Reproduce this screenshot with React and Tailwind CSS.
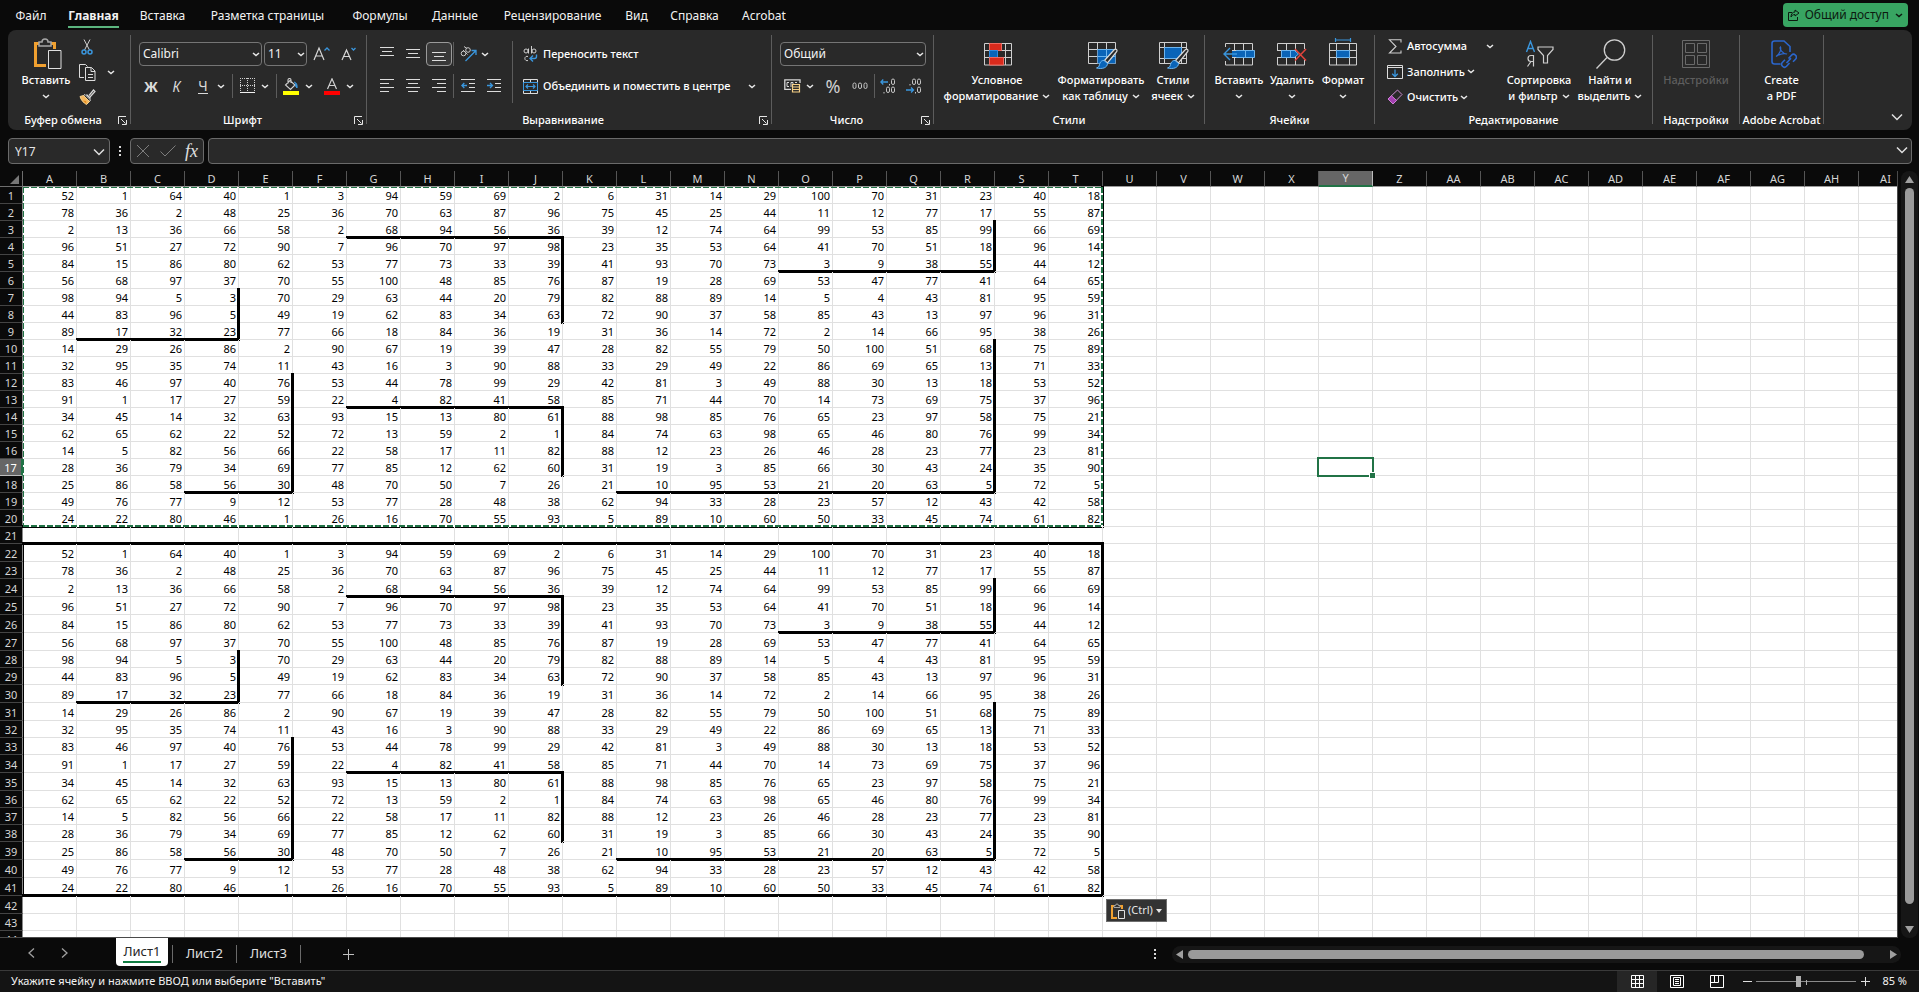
import React from "react";

const ROWS = [
  [52, 1, 64, 40, 1, 3, 94, 59, 69, 2, 6, 31, 14, 29, 100, 70, 31, 23, 40, 18],
  [78, 36, 2, 48, 25, 36, 70, 63, 87, 96, 75, 45, 25, 44, 11, 12, 77, 17, 55, 87],
  [2, 13, 36, 66, 58, 2, 68, 94, 56, 36, 39, 12, 74, 64, 99, 53, 85, 99, 66, 69],
  [96, 51, 27, 72, 90, 7, 96, 70, 97, 98, 23, 35, 53, 64, 41, 70, 51, 18, 96, 14],
  [84, 15, 86, 80, 62, 53, 77, 73, 33, 39, 41, 93, 70, 73, 3, 9, 38, 55, 44, 12],
  [56, 68, 97, 37, 70, 55, 100, 48, 85, 76, 87, 19, 28, 69, 53, 47, 77, 41, 64, 65],
  [98, 94, 5, 3, 70, 29, 63, 44, 20, 79, 82, 88, 89, 14, 5, 4, 43, 81, 95, 59],
  [44, 83, 96, 5, 49, 19, 62, 83, 34, 63, 72, 90, 37, 58, 85, 43, 13, 97, 96, 31],
  [89, 17, 32, 23, 77, 66, 18, 84, 36, 19, 31, 36, 14, 72, 2, 14, 66, 95, 38, 26],
  [14, 29, 26, 86, 2, 90, 67, 19, 39, 47, 28, 82, 55, 79, 50, 100, 51, 68, 75, 89],
  [32, 95, 35, 74, 11, 43, 16, 3, 90, 88, 33, 29, 49, 22, 86, 69, 65, 13, 71, 33],
  [83, 46, 97, 40, 76, 53, 44, 78, 99, 29, 42, 81, 3, 49, 88, 30, 13, 18, 53, 52],
  [91, 1, 17, 27, 59, 22, 4, 82, 41, 58, 85, 71, 44, 70, 14, 73, 69, 75, 37, 96],
  [34, 45, 14, 32, 63, 93, 15, 13, 80, 61, 88, 98, 85, 76, 65, 23, 97, 58, 75, 21],
  [62, 65, 62, 22, 52, 72, 13, 59, 2, 1, 84, 74, 63, 98, 65, 46, 80, 76, 99, 34],
  [14, 5, 82, 56, 66, 22, 58, 17, 11, 82, 88, 12, 23, 26, 46, 28, 23, 77, 23, 81],
  [28, 36, 79, 34, 69, 77, 85, 12, 62, 60, 31, 19, 3, 85, 66, 30, 43, 24, 35, 90],
  [25, 86, 58, 56, 30, 48, 70, 50, 7, 26, 21, 10, 95, 53, 21, 20, 63, 5, 72, 5],
  [49, 76, 77, 9, 12, 53, 77, 28, 48, 38, 62, 94, 33, 28, 23, 57, 12, 43, 42, 58],
  [24, 22, 80, 46, 1, 26, 16, 70, 55, 93, 5, 89, 10, 60, 50, 33, 45, 74, 61, 82],
];

const LETTERS = "ABCDEFGHIJKLMNOPQRSTUVWXYZ".split("");
const COLUMNS = [...LETTERS, ...LETTERS.slice(0, 9).map((l) => "A" + l)];
const TALL_ROWS = new Set([22, 24, 25, 26, 27, 30, 31, 34, 35, 39, 40, 41, 42]);

/* Wall segments inside a 20x20 block: [column, first row, last row]. */
const WALLS_RIGHT = [
  ["J", 4, 8],
  ["J", 14, 17],
  ["D", 7, 9],
  ["E", 12, 18],
  ["R", 3, 5],
  ["R", 10, 18],
  ["T", 1, 20],
];
/* [row, first column, last column] */
const WALLS_BOTTOM = [
  [3, "G", "J"],
  [13, "G", "J"],
  [9, "B", "D"],
  [18, "D", "E"],
  [5, "O", "R"],
  [18, "L", "R"],
  [20, "A", "T"],
];

function cellInfo(row, c) {
  const inBlock = c < 20 && (row <= 20 || (row >= 22 && row <= 41));
  if (!inBlock) {
    return { value: "", right: false, bottom: row === 21 && c < 20, left: false };
  }
  const r = row > 21 ? row - 21 : row;
  const col = COLUMNS[c];
  return {
    value: ROWS[r - 1][c],
    right: WALLS_RIGHT.some(([k, a, b]) => k === col && r >= a && r <= b),
    bottom: WALLS_BOTTOM.some(([k, a, b]) => k === r && col >= a && col <= b),
    left: row >= 22 && c === 0,
  };
}

function Chev({ className = "text-[#e6e6e6]" }) {
  return (
    <svg width="8" height="5" viewBox="0 0 8 5" fill="none" className={"shrink-0 " + className}>
      <path d="M1 1l3 2.500L7 1" stroke="currentColor" strokeWidth="1.500" />
    </svg>
  );
}

function BigChev() {
  return (
    <svg width="12" height="8" viewBox="0 0 12 8" fill="none">
      <path d="M1 1.500l5 5 5-5" stroke="#e0e0e0" strokeWidth="1.500" />
    </svg>
  );
}

function Drop({ label, className = "w-[14px] justify-end" }) {
  return (
    <button aria-label={label} className={"flex h-6 items-center " + className}>
      <Chev />
    </button>
  );
}

function Tool({ label, className = "", children }) {
  return (
    <button aria-label={label} className={"flex h-6 shrink-0 items-center justify-center whitespace-nowrap " + className}>
      {children}
    </button>
  );
}

function Sep({ className = "w-[14px]" }) {
  return (
    <div className={"flex h-6 shrink-0 justify-center " + className}>
      <div className="h-full w-px bg-[#5c5c5c]" />
    </div>
  );
}

function Group({ label, launcher, className, children }) {
  return (
    <>
      <section aria-label={label} className={"flex h-full shrink-0 flex-col " + className}>
        <div className="flex h-20 min-w-0">{children}</div>
        <div className="flex h-5 items-center">
          <span className="flex-1 whitespace-nowrap text-center">{label}</span>
          {launcher && (
            <button aria-label={label + ": параметры"} className="flex h-4 w-3 items-center">
              <svg width="9" height="9" viewBox="0 0 9 9" fill="none" stroke="#e6e6e6">
                <path d="M.5 8V.5H8M3 3l4.500 4.500M8.500 4v4.500H4" />
              </svg>
            </button>
          )}
        </div>
      </section>
      <div className="mt-[5px] h-[89px] w-px shrink-0 bg-[#5c5c5c]" />
    </>
  );
}

function Large({ icon, lines, drop, below, className, disabled }) {
  return (
    <button
      disabled={disabled}
      className={"flex shrink-0 flex-col items-center whitespace-nowrap pt-[6px] leading-4 disabled:text-[#5e5e5e] " + className}
    >
      <span className="flex h-9 items-center justify-center">{icon}</span>
      {lines.map((l, i) => (
        <span key={l} className="flex items-center gap-1">
          {l}
          {drop && i === lines.length - 1 && <Chev />}
        </span>
      ))}
      {below && (
        <span className="flex h-4 items-center">
          <Chev />
        </span>
      )}
    </button>
  );
}

function Combo({ id, label, value, className }) {
  return (
    <div className={"relative h-6 " + className}>
      <select
        id={id}
        aria-label={label}
        defaultValue={value}
        className="h-6 w-full appearance-none rounded border border-[#757575] bg-[#292929] pl-[3px] text-[12px] font-normal text-[#f2f2f2]"
      >
        <option>{value}</option>
      </select>
      <span className="pointer-events-none absolute inset-y-0 right-[2px] flex items-center">
        <Chev />
      </span>
    </div>
  );
}

/* ---------- icons ---------- */

function PasteIcon() {
  return (
    <svg width="28" height="32" viewBox="0 0 28 32" fill="none" className="ml-1">
      <path d="M5 5.500H1.500V27.500H12" stroke="#f0a030" strokeWidth="3" />
      <path d="M16 5.500H20.500V11" stroke="#f0a030" strokeWidth="3" />
      <path d="M5 8V4h3a3 3 0 0 1 6 0h3v4z" stroke="#a6a6a6" fill="#292929" strokeWidth="1.500" />
      <path d="M14.500 12.500h12.500v18H14.500z" stroke="#e0e0e0" fill="#292929" />
    </svg>
  );
}

function CutIcon() {
  return (
    <svg width="12" height="16" viewBox="0 0 12 16" fill="none">
      <path d="M3 .5l5.500 10.500M9 .5L3.500 11" stroke="#d0d0d0" />
      <circle cx="3" cy="13" r="2" stroke="#3a96dd" strokeWidth="1.500" />
      <circle cx="9" cy="13" r="2" stroke="#3a96dd" strokeWidth="1.500" />
    </svg>
  );
}

function CopyIcon() {
  return (
    <svg width="17" height="17" viewBox="0 0 17 17" fill="none" stroke="#dcdcdc">
      <path d="M5 13.500H.5V.5h6l2 2M6.500 3.500h6l3.500 3.500v9.500H6.500zM12 3.500V7.500h4M9 10.500h5M9 13.500h5" />
    </svg>
  );
}

function PainterIcon() {
  return (
    <svg width="17" height="16" viewBox="0 0 17 16" fill="none">
      <path d="M7.500 5.500l4 4M10 6.500l4.500-5.500 1.500 1.500-5 5.500" stroke="#d8d8d8" strokeWidth="1.200" />
      <path d="M6 5.500l5.500 5.500-1 1.500-6-6z" stroke="#d8d8d8" />
      <path d="M1 7.500l3.500-1 6 6-3 3C4.500 14 2 11 1 7.500z" fill="#f4b860" stroke="#f7d08a" />
      <path d="M4 11.500l3 .5.500 3z" fill="#e88c1a" />
    </svg>
  );
}

function GrowIcon({ shrink }) {
  return (
    <svg width="17" height="16" viewBox="0 0 17 16" fill="none">
      {shrink ? (
        <path d="M2 14L6.500 4 11 14M3.500 10.500h6" stroke="#d6d6d6" strokeWidth="1.200" />
      ) : (
        <path d="M1 14L6 2l5 12M2.800 10h6.500" stroke="#d6d6d6" strokeWidth="1.200" />
      )}
      <path d={shrink ? "M11.500 2l2 2 2-2" : "M11.500 4.500l2.500-2.500 2.500 2.500"} stroke="#3a96dd" strokeWidth="1.300" />
    </svg>
  );
}

function BordersIcon() {
  return (
    <svg width="15" height="16" viewBox="0 0 15 16" fill="none">
      <path d="M0 .5h15M0 7.500h15" stroke="#d0d0d0" strokeDasharray="1 1" />
      <path d="M.5 0v14M7.500 0v14M14.500 0v14" stroke="#d0d0d0" strokeDasharray="1 1" />
      <path d="M0 14.500h15" stroke="#f0f0f0" />
    </svg>
  );
}

function FillIcon() {
  return (
    <svg width="16" height="17" viewBox="0 0 16 17" fill="none">
      <path d="M7 2.500l5 4.500-4.500 4.500-5-4.500zM5 5.500V2a1.500 1.500 0 0 1 3 0v3" stroke="#d0d0d0" strokeWidth="1.100" />
      <path d="M11 4c2.500.5 3.500 3 3 6-1.500-1.500-2-3-1.500-4" stroke="#3a96dd" fill="#3a96dd" />
      <path d="M0 13h16v4H0z" fill="#ffff00" />
    </svg>
  );
}

function FontColorIcon() {
  return (
    <svg width="16" height="17" viewBox="0 0 16 17" fill="none">
      <path d="M3.500 11L8 .8 12.500 11M5 7.500h6" stroke="#d0d0d0" strokeWidth="1.200" />
      <path d="M0 13h16v4H0z" fill="#ff0000" />
    </svg>
  );
}

function Bars({ bars, h = 14 }) {
  return (
    <svg width="14" height={h} viewBox={"0 0 14 " + h}>
      {bars.map(([x, y, w]) => (
        <rect key={y} x={x} y={y} width={w} height="1" fill="#dcdcdc" />
      ))}
    </svg>
  );
}

function OrientIcon() {
  return (
    <svg width="17" height="16" viewBox="0 0 17 16" fill="none">
      <circle cx="3.500" cy="7.500" r="2.300" stroke="#c8c8c8" />
      <path d="M3 4l4.500 4.500" stroke="#c8c8c8" />
      <circle cx="8" cy="4" r="2.300" stroke="#c8c8c8" />
      <path d="M4 .5l3 2" stroke="#c8c8c8" />
      <path d="M5.500 15L15.500 5M11.500 4.500h4.500v4.500" stroke="#3a96dd" strokeWidth="1.300" />
    </svg>
  );
}

function IndentIcon({ inc }) {
  return (
    <svg width="14" height="14" viewBox="0 0 14 14" fill="none">
      <path d="M0 .5h14M8 4.500h6M8 8.500h6M0 12.500h14" stroke="#dcdcdc" />
      <path d={inc ? "M0 6.500h5.500M3 4l2.500 2.500L3 9" : "M6 6.500H.8M3.300 4L.8 6.500 3.300 9"} stroke="#3a96dd" strokeWidth="1.300" />
    </svg>
  );
}

function WrapIcon() {
  return (
    <svg width="15" height="16" viewBox="0 0 15 16" fill="none">
      <circle cx="3" cy="5" r="2" stroke="#cfcfcf" />
      <path d="M5.500 2.500v5M8.500 0v7.500" stroke="#cfcfcf" />
      <circle cx="11" cy="5" r="2" stroke="#cfcfcf" />
      <path d="M5 10.500a2.200 2.200 0 1 0 0 4" stroke="#cfcfcf" />
      <path d="M13.500 8.500v2q0 2-2 2H7.500M10 9.500l-3 3 3 3" stroke="#3a96dd" strokeWidth="1.400" />
    </svg>
  );
}

function MergeIcon() {
  return (
    <svg width="15" height="15" viewBox="0 0 15 15" fill="none">
      <path d="M.5.500h14v14H.5zM7.500 0v4M7.500 11v4" stroke="#dcdcdc" />
      <path d="M.5 3.500h14v8H.5z" stroke="#3a96dd" fill="#292929" />
      <path d="M3 7.500h9M5 5.500l-2 2 2 2M10 5.500l2 2-2 2" stroke="#3a96dd" strokeWidth="1.200" />
    </svg>
  );
}

function MoneyIcon() {
  return (
    <svg width="17" height="14" viewBox="0 0 17 14" fill="none">
      <path d="M16 4V.8H.8v9.500H7" stroke="#d8d8d8" strokeWidth="1.300" />
      <path d="M5 3.500H3v4h2M7 8V3.500h2V5M11 3.500h2" stroke="#d8d8d8" />
      <path d="M8.500 5.500h7v7.500h-7zM8.500 8h7M8.500 10.500h7" stroke="#f5cf86" fill="#2b2b2b" strokeWidth="1.200" />
    </svg>
  );
}

function Zero({ x, y }) {
  return <rect x={x} y={y} width="3" height="5.500" rx="1.500" stroke="#c4c4c4" />;
}

function DecimalsIcon({ less }) {
  return (
    <svg width="16" height="16" viewBox="0 0 16 16" fill="none">
      {less ? (
        <>
          <Zero x="6.500" y="1" />
          <Zero x="11.500" y="1" />
          <Zero x="11.500" y="9" />
          <path d="M4 6v1.500M9.500 14v1.500" stroke="#c4c4c4" />
          <path d="M0 12h7.500M5 9.500L7.500 12 5 14.500" stroke="#3a96dd" strokeWidth="1.300" />
        </>
      ) : (
        <>
          <Zero x="11.500" y="1" />
          <Zero x="6.500" y="9" />
          <Zero x="11.500" y="9" />
          <path d="M9.500 6v1.500M4 14v1.500" stroke="#c4c4c4" />
          <path d="M8 4H.8M3.300 1.500L.8 4l2.500 2.500" stroke="#3a96dd" strokeWidth="1.300" />
        </>
      )}
    </svg>
  );
}

function CondIcon() {
  return (
    <svg width="28" height="23" viewBox="0 0 28 23" fill="none" className="ml-0.5">
      <path d="M.5.500h27v21.500H.5zM5.500 0v22M13.500 0v22M21.500 0v22M0 7.500h28M0 14.500h28" stroke="#cfcfcf" />
      <path d="M5.500.500h12v7h-12z" fill="#d92a1c" stroke="#ef6a60" />
      <path d="M14 8h7v6h-7z" fill="#292929" />
      <path d="M5.500 7.500h8v7h-8z" fill="#0a64b8" stroke="#2c8be0" />
      <path d="M5.500 14.500h14v7.500h-14z" fill="#d92a1c" stroke="#ef6a60" />
    </svg>
  );
}

function BrushOver() {
  return (
    <>
      <path d="M28.500 7.500c1 .8.500 2-.5 3L19.500 21l-3-2.500 9-10c1-1 2-1.800 3-1z" fill="#292929" stroke="#d8d8d8" strokeWidth="1.200" />
      <path d="M16 18.500l3.500 3c0 4-5 6-11 4.500 3-.8 2.500-2.500 3.500-5 .8-1.800 2.500-2.800 4-2.500z" fill="#0a64b8" stroke="#6cb4ee" />
    </>
  );
}

function TableStyleIcon() {
  return (
    <svg width="31" height="28" viewBox="0 0 31 28" fill="none" className="ml-1 mt-1">
      <path d="M.5.500h27v21H.5zM9.500 0v22M18.500 0v22M0 7.500h28M0 14.500h28" stroke="#cfcfcf" />
      <path d="M9.500 7.500h18v14h-18z" fill="#0a64b8" />
      <path d="M18.500 7.500v14M9.500 14.500h18M9.500 7.500h18" stroke="#6cb4ee" />
      <BrushOver />
    </svg>
  );
}

function CellStyleIcon() {
  return (
    <svg width="31" height="28" viewBox="0 0 31 28" fill="none" className="ml-0.5 mt-1">
      <path d="M.5.500h27v21H.5zM5.500 0v22M22.500 0v22M0 5.500h28M0 16.500h28" stroke="#cfcfcf" />
      <path d="M5.500 5.500h17v11h-17z" fill="#0a64b8" stroke="#6cb4ee" />
      <BrushOver />
    </svg>
  );
}

function InsertIcon() {
  return (
    <svg width="32" height="23" viewBox="0 0 32 23" fill="none">
      <path d="M2.500 4V.5h27V22h-27v-4M11.500 0v22M20.500 0v22M2 7.500h28M2 14.500h28" stroke="#cfcfcf" />
      <path d="M13.500 7.500h18v7h-18z" fill="#0a64b8" stroke="#6cb4ee" />
      <path d="M22.500 7.500v7" stroke="#6cb4ee" />
      <path d="M0 6h9v10H0z" fill="#292929" />
      <path d="M9 8h5v6H9z" fill="#0a64b8" />
      <path d="M14 11H1M7 5l-6 6 6 6" stroke="#3a96dd" strokeWidth="1.400" />
    </svg>
  );
}

function DeleteIcon() {
  return (
    <svg width="30" height="23" viewBox="0 0 30 23" fill="none">
      <path d="M.5 7V.5h27V6M.5 15v7h27v-5M9.500 0v22M18.500 0v22M0 7.500h19M0 14.500h19" stroke="#cfcfcf" />
      <path d="M0 8.500h4v5H0z" fill="#292929" />
      <path d="M4.500 7.500h13l4 3.500-4 3.500h-13z" fill="#0a64b8" stroke="#6cb4ee" />
      <path d="M13.500 7.500v7" stroke="#6cb4ee" />
      <path d="M18 6l11 11.500M29 6L18 17.500" stroke="#e0443c" strokeWidth="1.600" />
    </svg>
  );
}

function FormatIcon() {
  return (
    <svg width="28" height="28" viewBox="0 0 28 28" fill="none" className="mb-1">
      <path d="M6.500 2h15M6.500 0v4M21.500 0v4" stroke="#3a96dd" strokeWidth="1.200" />
      <path d="M.5 5.500h27V27H.5zM7.500 5v22M20.500 5v22M0 12.500h28M0 19.500h28" stroke="#cfcfcf" />
      <path d="M7.500 12.500h13v7h-13z" fill="#0a64b8" stroke="#6cb4ee" />
    </svg>
  );
}

function SigmaIcon() {
  return (
    <svg width="14" height="15" viewBox="0 0 14 15" fill="none">
      <path d="M13 3.500V.8H1.500L8 7.500l-6.500 6.500H13v-2.500" stroke="#d0d0d0" strokeWidth="1.100" />
    </svg>
  );
}

function FillDownIcon() {
  return (
    <svg width="16" height="14" viewBox="0 0 16 14" fill="none">
      <path d="M.5.500h15v13H.5zM0 2.500h16" stroke="#dcdcdc" />
      <path d="M8 4.500v7M5.200 8.700L8 11.500l2.800-2.800" stroke="#3a96dd" strokeWidth="1.300" />
    </svg>
  );
}

function EraserIcon() {
  return (
    <svg width="16" height="16" viewBox="0 0 16 16" fill="none">
      <path d="M10.500 1L15 5.500 6 14.800 1 10z" stroke="#c98ad0" />
      <path d="M4.500 6.800l5 4.700-3.500 3.500L1 10z" fill="#a33fb0" stroke="#d07fd8" />
    </svg>
  );
}

function SortIcon() {
  return (
    <svg width="29" height="28" viewBox="0 0 29 28" fill="none">
      <path d="M1.500 12L5.500 1.500 9.500 12M3 8.500h5" stroke="#3a96dd" strokeWidth="1.400" />
      <path d="M8.500 26.500V15.500H6a3 3 0 0 0 0 6h2.500M6 21.500l-3.500 5" stroke="#cfcfcf" strokeWidth="1.200" />
      <path d="M13 7h15v2.500l-5.500 6V23h-4v-7.500L13 9.500z" stroke="#cfcfcf" strokeWidth="1.200" />
    </svg>
  );
}

function FindIcon() {
  return (
    <svg width="30" height="30" viewBox="0 0 30 30" fill="none" stroke="#cfcfcf" strokeWidth="1.300" className="ml-0.5">
      <circle cx="18.500" cy="11" r="10.200" />
      <path d="M11 18.500L.5 29.500" />
    </svg>
  );
}

function AddinsIcon() {
  return (
    <svg width="28" height="28" viewBox="0 0 28 28" fill="none" stroke="#6a6a6a">
      <path d="M.5.500h27v27H.5zM3.500 3.500h9v9h-9zM15.500 3.500h9v9h-9zM3.500 15.500h9v9h-9zM15.500 15.500h9v9h-9z" />
    </svg>
  );
}

function PdfIcon() {
  return (
    <svg width="26" height="29" viewBox="0 0 26 29" fill="none" stroke="#2b66cc" strokeWidth="1.600" className="ml-1">
      <path d="M9.500 24H3.500Q1 24 1 21.500V3.500Q1 1 3.500 1H13l6 5.500V12" />
      <path d="M5 16.500c3-1.500 5.500-6.500 4.500-9.500-1.500 1.500 2 7 6.500 7-3-1-8 .5-11 2.500z" strokeWidth="1.200" />
      <path d="M17.500 18.500l3-3.300a2.800 2.800 0 0 1 4 4l-2.500 2.600M18.500 23l-3 3.300a2.800 2.800 0 0 1-4-4l2.500-2.600M15.500 23l4.500-4.800" />
    </svg>
  );
}

/* ---------- page parts ---------- */

const TABS = [
  ["Файл", "w-[52px]"],
  ["Главная", "w-[73px]"],
  ["Вставка", "w-[65px]"],
  ["Разметка страницы", "w-[145px]"],
  ["Формулы", "w-[80px]"],
  ["Данные", "w-[70px]"],
  ["Рецензирование", "w-[125px]"],
  ["Вид", "w-[43px]"],
  ["Справка", "w-[73px]"],
  ["Acrobat", "w-[66px]"],
];

function MenuBar() {
  return (
    <div className="flex h-[30px] shrink-0 items-center justify-between pl-[5px] pr-[11px] text-[12px]">
      <nav className="flex pt-1">
        {TABS.map(([t, w]) => (
          <button key={t} className={"flex shrink-0 justify-center whitespace-nowrap leading-5 " + w}>
            {t === "Главная" ? <span className="border-b-2 border-[#5cb57f] font-bold">{t}</span> : t}
          </button>
        ))}
      </nav>
      <button className="flex h-6 shrink-0 items-center whitespace-nowrap rounded bg-[#38a562] px-[5px] text-[#0c1a10]">
        <svg width="12" height="12" viewBox="0 0 12 12" fill="none" stroke="#0c1a10">
          <path d="M4 3.500H.5v8h9V8M7 1l4 3-4 3V5.500C5 5.500 4 6.500 3 8c0-3 1.500-5 4-5z" />
        </svg>
        <span className="ml-[5px] mr-[6px]">Общий доступ</span>
        <Chev className="text-[#0c1a10]" />
      </button>
    </div>
  );
}

function Ribbon() {
  return (
    <div className="ml-2 mr-[7px] flex h-[100px] shrink-0 overflow-hidden rounded-lg bg-[#292929] text-[11px] font-medium text-white">
      <Group label="Буфер обмена" launcher className="w-[122px]">
        <Large className="ml-[6px] w-16" icon={<PasteIcon />} lines={["Вставить"]} below />
        <div className="flex flex-col pt-1">
          <Tool label="Вырезать" className="h-[26px] w-[18px]"><CutIcon /></Tool>
          <div className="flex h-[26px] items-center">
            <Tool label="Копировать" className="w-[18px]"><CopyIcon /></Tool>
            <Drop label="Параметры копирования" className="ml-[11px] w-2" />
          </div>
          <Tool label="Формат по образцу" className="h-[26px] w-[18px]"><PainterIcon /></Tool>
        </div>
      </Group>

      <Group label="Шрифт" launcher className="w-[235px]">
        <div className="flex flex-col gap-2 pl-2 pt-3">
          <div className="flex">
            <Combo id="font" label="Шрифт" value="Calibri" className="w-[123px]" />
            <Combo id="size" label="Размер шрифта" value="11" className="ml-0.5 w-[43px]" />
            <Tool label="Увеличить размер" className="ml-[6px] w-[17px]"><GrowIcon /></Tool>
            <Tool label="Уменьшить размер" className="ml-[10px] w-[17px]"><GrowIcon shrink /></Tool>
          </div>
          <div className="flex text-[14px] text-[#dadada]">
            <Tool label="Полужирный" className="w-6"><span className="font-bold">Ж</span></Tool>
            <Tool label="Курсив" className="w-[27px]"><span className="font-normal italic">К</span></Tool>
            <Tool label="Подчеркнутый" className="w-[26px]">
              <span className="w-[10px] border-b border-[#dadada] text-center font-normal leading-[14px]">Ч</span>
            </Tool>
            <Drop label="Виды подчеркивания" className="w-[9px] justify-end" />
            <Sep />
            <Tool label="Границы" className="w-4"><BordersIcon /></Tool>
            <Drop label="Все границы" />
            <Sep />
            <Tool label="Цвет заливки" className="w-4"><FillIcon /></Tool>
            <Drop label="Выбор цвета заливки" />
            <Tool label="Цвет текста" className="ml-[11px] w-4"><FontColorIcon /></Tool>
            <Drop label="Выбор цвета текста" />
          </div>
        </div>
      </Group>

      <Group label="Выравнивание" launcher className="w-[404px]">
        <div className="flex flex-col gap-2 pl-[7px] pt-3">
          <div className="flex">
            <Tool label="По верхнему краю" className="w-[26px]"><Bars bars={[[0, 1, 14], [2, 5, 10], [0, 9, 14]]} h={16} /></Tool>
            <Tool label="По середине" className="w-[26px]"><Bars bars={[[0, 3, 14], [2, 7, 10], [0, 11, 14]]} h={16} /></Tool>
            <Tool label="По нижнему краю" className="w-[26px] rounded border border-[#9a9a9a] bg-[#383838]">
              <Bars bars={[[0, 6, 14], [2, 10, 10], [0, 14, 14]]} h={16} />
            </Tool>
            <Sep className="w-[3px]" />
            <Tool label="Ориентация" className="w-[26px]"><OrientIcon /></Tool>
            <Drop label="Виды ориентации" className="w-2" />
          </div>
          <div className="flex">
            <Tool label="По левому краю" className="w-[26px]"><Bars bars={[[0, 0, 14], [0, 4, 9], [0, 8, 14], [0, 12, 9]]} /></Tool>
            <Tool label="По центру" className="w-[26px]"><Bars bars={[[0, 0, 14], [2, 4, 10], [0, 8, 14], [2, 12, 10]]} /></Tool>
            <Tool label="По правому краю" className="w-[26px]"><Bars bars={[[0, 0, 14], [5, 4, 9], [0, 8, 14], [5, 12, 9]]} /></Tool>
            <Sep className="w-[3px]" />
            <Tool label="Уменьшить отступ" className="w-[26px]"><IndentIcon /></Tool>
            <Tool label="Увеличить отступ" className="w-[26px]"><IndentIcon inc /></Tool>
          </div>
        </div>
        <div className="ml-[5px] mt-[11px] h-[62px] w-px bg-[#5c5c5c]" />
        <div className="flex flex-col gap-2 pl-[10px] pt-3">
          <button className="flex h-6 items-center gap-[5px] whitespace-nowrap">
            <WrapIcon />
            Переносить текст
          </button>
          <div className="flex">
            <button className="flex h-6 w-[219px] items-center gap-[5px] whitespace-nowrap">
              <MergeIcon />
              Объединить и поместить в центре
            </button>
            <Drop label="Виды объединения" />
          </div>
        </div>
      </Group>

      <Group label="Число" launcher className="w-[161px]">
        <div className="flex flex-col gap-2 pl-2 pt-3">
          <Combo id="numfmt" label="Числовой формат" value="Общий" className="w-[146px]" />
          <div className="flex text-[#d0d0d0]">
            <Tool label="Финансовый формат" className="w-6"><MoneyIcon /></Tool>
            <Drop label="Виды валют" className="w-[10px] justify-end" />
            <Tool label="Процентный формат" className="w-[38px] text-[18px] font-normal">%</Tool>
            <Tool label="Формат с разделителями" className="w-4">
              <svg width="16" height="8" viewBox="0 0 16 8" fill="none" className="shrink-0">
                <Zero x="1" y="1" />
                <Zero x="6.500" y="1" />
                <Zero x="12" y="1" />
              </svg>
            </Tool>
            <Sep className="w-3" />
            <Tool label="Увеличить разрядность" className="w-4"><DecimalsIcon /></Tool>
            <Tool label="Уменьшить разрядность" className="ml-[10px] w-4"><DecimalsIcon less /></Tool>
          </div>
        </div>
      </Group>

      <Group label="Стили" className="w-[270px]">
        <div className="flex gap-1 pl-[9px]">
          <Large className="w-[108px]" icon={<CondIcon />} lines={["Условное", "форматирование"]} drop />
          <Large className="w-[92px]" icon={<TableStyleIcon />} lines={["Форматировать", "как таблицу"]} drop />
          <Large className="w-[44px]" icon={<CellStyleIcon />} lines={["Стили", "ячеек"]} drop />
        </div>
      </Group>

      <Group label="Ячейки" className="w-[169px]">
        <div className="flex gap-px pl-2">
          <Large className="w-[52px]" icon={<InsertIcon />} lines={["Вставить"]} below />
          <Large className="w-[52px]" icon={<DeleteIcon />} lines={["Удалить"]} below />
          <Large className="w-[48px]" icon={<FormatIcon />} lines={["Формат"]} below />
        </div>
      </Group>

      <Group label="Редактирование" className="w-[277px]">
        <div className="flex w-[129px] flex-col pl-[10px] pt-1">
          <div className="flex h-[26px] items-center">
            <button className="flex w-[101px] items-center gap-0.5 whitespace-nowrap">
              <span className="flex w-5 justify-center"><SigmaIcon /></span>
              Автосумма
            </button>
            <Drop label="Виды суммы" className="w-2" />
          </div>
          <button className="flex h-[26px] items-center gap-0.5 whitespace-nowrap">
            <span className="flex w-5 justify-center"><FillDownIcon /></span>
            Заполнить
            <Chev />
          </button>
          <button className="flex h-[26px] items-center gap-0.5 whitespace-nowrap">
            <span className="flex w-5 justify-center"><EraserIcon /></span>
            Очистить
            <Chev />
          </button>
        </div>
        <div className="flex gap-0.5">
          <Large className="w-[70px]" icon={<SortIcon />} lines={["Сортировка", "и фильтр"]} drop />
          <Large className="w-[68px]" icon={<FindIcon />} lines={["Найти и", "выделить"]} drop />
        </div>
      </Group>

      <Group label="Надстройки" className="w-[86px]">
        <Large className="w-full" icon={<AddinsIcon />} lines={["Надстройки"]} disabled />
      </Group>

      <Group label="Adobe Acrobat" className="w-[83px]">
        <Large className="w-full" icon={<PdfIcon />} lines={["Create", "a PDF"]} />
      </Group>

      <button aria-label="Свернуть ленту" className="mb-[9px] ml-auto mr-[9px] self-end">
        <BigChev />
      </button>
    </div>
  );
}

function FormulaBar() {
  return (
    <div className="mb-[7px] ml-2 mr-[7px] mt-2 flex h-[26px] shrink-0 text-[12px]">
      <div className="flex w-[102px] items-center rounded border border-[#6a6a6a] bg-[#292929] pr-1 pt-0.5">
        <input aria-label="Имя ячейки" defaultValue="Y17" className="w-full min-w-0 bg-transparent pl-[6px] text-[#e6e6e6] outline-none" />
        <button aria-label="Список имен"><BigChev /></button>
      </div>
      <div className="flex w-5 flex-col items-center justify-center gap-0.5">
        <i className="size-0.5 bg-[#d8d8d8]" />
        <i className="size-0.5 bg-[#d8d8d8]" />
        <i className="size-0.5 bg-[#d8d8d8]" />
      </div>
      <div className="flex w-[74px] items-center justify-between rounded border border-[#6a6a6a] bg-[#292929] px-[5px]">
        <button aria-label="Отмена">
          <svg width="14" height="14" viewBox="0 0 14 14" fill="none" stroke="#7d7d7d"><path d="M1 1l12 12M13 1L1 13" /></svg>
        </button>
        <button aria-label="Ввод">
          <svg width="16" height="12" viewBox="0 0 16 12" fill="none" stroke="#7d7d7d"><path d="M.5 6.500L5 11 15.500.5" /></svg>
        </button>
        <button aria-label="Вставить функцию" className="font-['Liberation_Serif',serif] text-[18px] italic leading-5 text-[#e0e0e0]">
          fx
        </button>
      </div>
      <div className="ml-1 flex flex-1 items-center rounded border border-[#6a6a6a] bg-[#292929] pb-0.5 pr-[3px]">
        <input aria-label="Строка формул" className="h-full min-w-0 flex-1 bg-transparent px-1 text-white outline-none" />
        <button aria-label="Развернуть строку формул"><BigChev /></button>
      </div>
    </div>
  );
}

function Cell({ row, c }) {
  const { value, right, bottom, left } = cellInfo(row, c);
  const selected = row === 17 && COLUMNS[c] === "Y";
  return (
    <td
      className={
        "relative border-b border-r border-[#e0e0e0] p-0 pr-0.5 pt-0.5 text-right align-bottom" + (selected ? " z-10" : "")
      }
    >
      {value}
      {right && <i className="absolute -bottom-0.5 -right-0.5 -top-px w-[3px] bg-black" />}
      {bottom && <i className="absolute -bottom-0.5 -left-px -right-0.5 h-[3px] bg-black" />}
      {left && <i className="absolute -bottom-px left-0 top-0 w-px bg-black" />}
      {selected && (
        <>
          <i className="absolute -inset-0.5 border-2 border-[#217346]" />
          <i className="absolute -bottom-[3px] -right-[3px] size-[5px] bg-[#217346] ring-1 ring-white" />
        </>
      )}
    </td>
  );
}

function Sheet() {
  return (
    <div className="flex min-h-0 flex-1">
      <div className="relative min-w-0 flex-1 overflow-hidden border-b border-r border-[#4a4a4a] bg-white">
        <table className="w-[1913px] table-fixed border-separate border-spacing-0 text-[11px] leading-[14px] text-black">
          <colgroup>
            <col className="w-[23px]" />
            {COLUMNS.map((c) => (
              <col key={c} className="w-[54px]" />
            ))}
          </colgroup>
          <thead>
            <tr className="h-4 bg-[#0a0a0a] leading-[15px] text-[#d6d6d6]">
              <th aria-label="Выделить все" className="border-b border-r border-[#6e6e6e] p-0">
                <svg width="9" height="9" viewBox="0 0 9 9" className="ml-auto mr-[3px] mt-0.5">
                  <path d="M9 0v9H0z" fill="#777" />
                </svg>
              </th>
              {COLUMNS.map((c) => (
                <th
                  key={c}
                  className={
                    c === "Y"
                      ? "border-b-2 border-r border-b-[#217346] border-r-[#bdbdbd] bg-[#666666] p-0 font-normal leading-[14px]"
                      : "border-b border-r border-b-[#9a9a9a] border-r-[#555555] p-0 font-normal"
                  }
                >
                  {c}
                </th>
              ))}
            </tr>
          </thead>
          <tbody>
            {Array.from({ length: 44 }, (_, i) => i + 1).map((row) => (
              <tr key={row} className={TALL_ROWS.has(row) ? "h-[18px]" : "h-[17px]"}>
                <th
                  className={
                    row === 17
                      ? "border-b border-r-2 border-b-[#bdbdbd] border-r-[#217346] bg-[#666666] p-0 pt-0.5 text-center align-bottom font-normal text-white"
                      : "border-b border-r border-b-[#444444] border-r-[#8a8a8a] bg-[#0a0a0a] p-0 pt-0.5 text-center align-bottom font-normal text-[#d6d6d6]"
                  }
                >
                  {row}
                </th>
                {COLUMNS.map((c, i) => (
                  <Cell key={c} row={row} c={i} />
                ))}
              </tr>
            ))}
          </tbody>
        </table>

        {/* marching ants around the copied range A1:T20 */}
        <div className="pointer-events-none absolute left-[23px] top-4 h-[340px] w-[1080px]">
          <i className="absolute left-0 top-0 h-px w-full bg-[repeating-linear-gradient(90deg,#217346_0_6px,#ffffff_6px_8px)]" />
          <i className="absolute left-0 top-0 h-full w-px bg-[repeating-linear-gradient(180deg,#217346_0_6px,#ffffff_6px_8px)]" />
          <i className="absolute right-0 top-0 h-full w-0.5 bg-[repeating-linear-gradient(180deg,#217346_0_6px,#ffffff_6px_8px)]" />
          <i className="absolute bottom-0 left-0 h-0.5 w-full bg-[repeating-linear-gradient(90deg,#217346_0_6px,#ffffff_6px_8px)]" />
        </div>

        <button className="absolute left-[1106px] top-[728px] flex h-[23px] w-[61px] items-center gap-[3px] whitespace-nowrap border border-[#6e6e6e] bg-[#333333] pl-1 text-[11px] text-[#e6e6e6]">
          <svg width="14" height="16" viewBox="0 0 14 16" fill="none" className="shrink-0">
            <path d="M3 3H1v12h5M9 3h2v3" stroke="#f0a030" strokeWidth="2" />
            <path d="M3 4.500v-2h1.500a1.500 1.500 0 0 1 3 0H9v2z" stroke="#a6a6a6" fill="#333" />
            <path d="M7.500 7.500h6v8h-6z" stroke="#e0e0e0" fill="#333" />
          </svg>
          (Ctrl)
          <svg width="6" height="4" viewBox="0 0 6 4"><path d="M0 0h6L3 4z" fill="#e6e6e6" /></svg>
        </button>
      </div>

      <div className="ml-[3px] mr-px flex w-[17px] shrink-0 flex-col items-center rounded-lg bg-[#161616] py-[5px]">
        <svg width="9" height="7" viewBox="0 0 9 7"><path d="M4.500 0L9 7H0z" fill="#a0a0a0" /></svg>
        <div className="mb-[22px] mt-[5px] w-[9px] flex-1 rounded-full bg-[#9a9a9a]" />
        <svg width="9" height="7" viewBox="0 0 9 7"><path d="M4.500 7L9 0H0z" fill="#a0a0a0" /></svg>
      </div>
    </div>
  );
}

function SheetTabs() {
  return (
    <div className="flex h-8 shrink-0 text-[13px] text-[#e0e0e0]">
      <div className="flex w-[116px] items-center gap-[26px] pl-7 pb-0.5">
        <button aria-label="Предыдущий лист">
          <svg width="7" height="10" viewBox="0 0 7 10" fill="none" stroke="#a0a0a0" strokeWidth="1.300"><path d="M6 .5L1 5l5 4.500" /></svg>
        </button>
        <button aria-label="Следующий лист">
          <svg width="7" height="10" viewBox="0 0 7 10" fill="none" stroke="#a0a0a0" strokeWidth="1.300"><path d="M1 .5L6 5 1 9.500" /></svg>
        </button>
      </div>
      <button className="flex h-7 w-[52px] items-start justify-center rounded-b bg-white pt-[3px] text-[#262626]">
        <span className="border-b-2 border-[#107c41] leading-5">Лист1</span>
      </button>
      <div className="flex items-center">
        <div className="ml-1 h-[18px] w-px bg-[#6a6a6a]" />
        <button className="w-[63px]">Лист2</button>
        <div className="h-[18px] w-px bg-[#6a6a6a]" />
        <button className="w-[63px]">Лист3</button>
        <div className="h-[18px] w-px bg-[#6a6a6a]" />
        <button aria-label="Новый лист" className="ml-[42px]">
          <svg width="11" height="11" viewBox="0 0 11 11" stroke="#c0c0c0"><path d="M5.500 0v11M0 5.500h11" /></svg>
        </button>
      </div>
      <div className="ml-auto flex items-center">
        <div className="flex flex-col gap-0.5">
          <i className="size-0.5 bg-[#d8d8d8]" />
          <i className="size-0.5 bg-[#d8d8d8]" />
          <i className="size-0.5 bg-[#d8d8d8]" />
        </div>
        <div className="ml-4 mr-[18px] flex h-[17px] w-[38vw] items-center rounded-full bg-[#161616] px-1">
          <svg width="7" height="9" viewBox="0 0 7 9" className="shrink-0"><path d="M7 0v9L0 4.500z" fill="#a0a0a0" /></svg>
          <div className="ml-[5px] mr-[26px] h-[9px] flex-1 rounded-full bg-[#9a9a9a]" />
          <svg width="7" height="9" viewBox="0 0 7 9" className="shrink-0"><path d="M0 0v9l7-4.500z" fill="#a0a0a0" /></svg>
        </div>
      </div>
    </div>
  );
}

function StatusBar() {
  return (
    <div className="flex h-[22px] shrink-0 items-center border-t border-[#3a3a3a] bg-[#141414] pl-[11px] pr-3 text-[11px]">
      <span className="whitespace-nowrap">Укажите ячейку и нажмите ВВОД или выберите "Вставить"</span>
      <div className="ml-auto flex h-full items-center">
        <button aria-label="Обычный" className="flex h-full w-10 items-center justify-center bg-[#262626]">
          <svg width="13" height="13" viewBox="0 0 13 13" fill="none" stroke="#fff"><path d="M.5.500h12v12H.5zM4.500 0v13M8.500 0v13M0 4.500h13M0 8.500h13" /></svg>
        </button>
        <button aria-label="Разметка страницы" className="flex h-full w-10 items-center justify-center">
          <svg width="14" height="13" viewBox="0 0 14 13" fill="none" stroke="#fff"><path d="M.5.500h13v12H.5zM3.500 2.500h7v8h-7zM5 4.500h4M5 6.500h4M5 8.500h4" /></svg>
        </button>
        <button aria-label="Страничный режим" className="flex h-full w-10 items-center justify-center">
          <svg width="14" height="13" viewBox="0 0 14 13" fill="none" stroke="#fff"><path d="M.5.500h13v12H.5zM4.500 0v7.500M8.500 0v7.500M.5 7.500h8" /></svg>
        </button>
        <button aria-label="Уменьшить" className="ml-[6px]">
          <svg width="9" height="9" viewBox="0 0 9 9" stroke="#e0e0e0"><path d="M0 4.500h9" /></svg>
        </button>
        <div className="relative ml-1 flex h-[14px] w-[100px] items-center">
          <input
            type="range"
            aria-label="Масштаб"
            min="0"
            max="100"
            defaultValue="42"
            className="h-[14px] w-full appearance-none bg-[linear-gradient(#8a8a8a,#8a8a8a)] bg-[length:100%_1px] bg-center bg-no-repeat [&::-webkit-slider-thumb]:h-[11px] [&::-webkit-slider-thumb]:w-[5px] [&::-webkit-slider-thumb]:appearance-none [&::-webkit-slider-thumb]:bg-[#b0b0b0]"
          />
          <i className="pointer-events-none absolute left-1/2 top-[5px] h-[5px] w-px bg-[#b0b0b0]" />
        </div>
        <button aria-label="Увеличить" className="ml-[5px]">
          <svg width="9" height="9" viewBox="0 0 9 9" stroke="#e0e0e0"><path d="M0 4.500h9M4.500 0v9" /></svg>
        </button>
        <span className="w-[37px] whitespace-nowrap text-right">85 %</span>
      </div>
    </div>
  );
}

export default function App() {
  return (
    <div className="flex h-screen flex-col overflow-hidden bg-[#0a0a0a] font-['Noto_Sans','Open_Sans',sans-serif] text-[#f2f2f2]">
      <MenuBar />
      <Ribbon />
      <FormulaBar />
      <Sheet />
      <SheetTabs />
      <StatusBar />
    </div>
  );
}
